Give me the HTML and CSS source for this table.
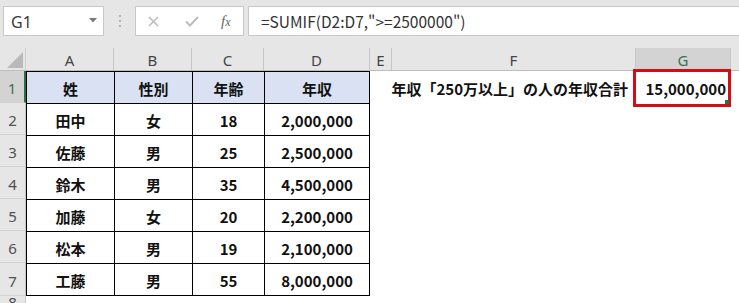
FILE: index.html
```html
<!DOCTYPE html>
<html lang="ja">
<head>
<meta charset="utf-8">
<link rel="stylesheet" href="styles.css">
</head>
<body>
<div class="app">
  <div class="toolbar">
    <div class="namebox">
      <span class="nb-text">G1</span>
      <svg class="caret" width="8" height="5" viewBox="0 0 8 5"><path d="M0 0H8L4 4.5Z" fill="#7a7a7a"/></svg>
    </div>
    <div class="dots">
      <svg width="4" height="14" viewBox="0 0 4 14"><circle cx="2" cy="2" r="1.1" fill="#a8a8a8"/><circle cx="2" cy="7" r="1.1" fill="#a8a8a8"/><circle cx="2" cy="12" r="1.1" fill="#a8a8a8"/></svg>
    </div>
    <div class="fxbox">
      <svg class="ic-x" width="11" height="11" viewBox="0 0 11 11"><path d="M1 1L10 10M10 1L1 10" stroke="#bdbdbd" stroke-width="1.6" fill="none"/></svg>
      <svg class="ic-check" width="14" height="11" viewBox="0 0 14 11"><path d="M1 5.5L5 9.5L13 1" stroke="#bdbdbd" stroke-width="2" fill="none"/></svg>
      <span class="fx">f<span class="fx-x">x</span></span>
    </div>
    <div class="formula">=SUMIF(D2:D7,"&gt;=2500000")</div>
  </div>

  <div class="sheet">
    <div class="corner"><svg width="26" height="23" viewBox="0 0 26 23"><path d="M23 4V20H7Z" fill="#b9b9b9"/></svg></div>
    <div class="colhead">A</div>
    <div class="colhead">B</div>
    <div class="colhead">C</div>
    <div class="colhead">D</div>
    <div class="colhead">E</div>
    <div class="colhead">F</div>
    <div class="colhead sel">G</div>
    <div class="colhead last"></div>

    <div class="rowheads">
      <div class="rowhead sel">1</div>
      <div class="rowhead">2</div>
      <div class="rowhead">3</div>
      <div class="rowhead">4</div>
      <div class="rowhead">5</div>
      <div class="rowhead">6</div>
      <div class="rowhead tall">7</div>
      <div class="rowhead partial">8</div>
    </div>

    <div class="table">
      <div class="cell hdr">姓</div>
      <div class="cell hdr">性別</div>
      <div class="cell hdr">年齢</div>
      <div class="cell hdr">年収</div>

      <div class="cell">田中</div><div class="cell">女</div><div class="cell">18</div><div class="cell">2,000,000</div>
      <div class="cell">佐藤</div><div class="cell">男</div><div class="cell">25</div><div class="cell">2,500,000</div>
      <div class="cell">鈴木</div><div class="cell">男</div><div class="cell">35</div><div class="cell">4,500,000</div>
      <div class="cell">加藤</div><div class="cell">女</div><div class="cell">20</div><div class="cell">2,200,000</div>
      <div class="cell">松本</div><div class="cell">男</div><div class="cell">19</div><div class="cell">2,100,000</div>
      <div class="cell">工藤</div><div class="cell">男</div><div class="cell">55</div><div class="cell">8,000,000</div>
    </div>

    <div class="label-f1">年収「250万以上」の人の年収合計</div>
    <div class="value-g1">
      <span>15,000,000</span>
      <div class="redbox"></div>
      <div class="handle"></div>
    </div>
  </div>
</div>
</body>
</html>
```

FILE: styles.css
```css
html, body {
  margin: 0;
  padding: 0;
  background: #e6e6e6;
}
body {
  width: 739px;
  height: 303px;
  overflow: hidden;
  font-family: "Noto Sans CJK JP", "Noto Sans", sans-serif;
}
.app {
  display: flex;
  flex-direction: column;
  height: 303px;
}

/* ---------- toolbar ---------- */
.toolbar {
  height: 48px;
  box-sizing: border-box;
  padding: 6px 0 0 3px;
  display: flex;
  align-items: flex-start;
  flex: none;
}
.namebox {
  width: 101px;
  height: 30px;
  box-sizing: border-box;
  background: #fff;
  border: 1px solid #c9c9c9;
  display: flex;
  align-items: center;
  padding: 0 6px 0 7px;
}
.nb-text {
  flex: 1;
  font-family: "Noto Sans", sans-serif;
  font-size: 16px;
  color: #3a3a3a;
  line-height: 1;
  padding-top: 2px;
}
.caret { margin-top: -1px; }
.dots {
  width: 31px;
  height: 30px;
  display: flex;
  align-items: center;
  justify-content: center;
}
.fxbox {
  width: 109px;
  height: 30px;
  box-sizing: border-box;
  background: #fff;
  border: 1px solid #c9c9c9;
  display: flex;
  align-items: center;
  padding-left: 12px;
}
.ic-x { margin-right: 26px; }
.ic-check { margin-right: 22px; }
.fx {
  font-family: "Liberation Serif", serif;
  font-style: italic;
  font-size: 15px;
  color: #666;
  line-height: 1;
}
.fx-x { font-size: 12px; }
.formula {
  flex: 1;
  height: 30px;
  margin-left: 4px;
  box-sizing: border-box;
  background: #fff;
  border: 1px solid #c9c9c9;
  border-right: none;
  padding-left: 12px;
  display: flex;
  align-items: center;
  font-size: 15.5px;
  color: #333;
  white-space: pre;
}

/* ---------- sheet ---------- */
.sheet {
  flex: 1;
  display: grid;
  grid-template-columns: 26px 88px 78px 72px 106px 22px 244px 95px 1fr;
  grid-template-rows: 23px repeat(6, 32px) 33px 1fr;
  background: #fff;
}
.corner {
  background: #e6e6e6;
  border-bottom: 1px solid #bdbdbd;
  box-sizing: border-box;
  border-right: 1px solid #cfcfcf;
}
.corner svg { display: block; }
.colhead {
  background: #e6e6e6;
  box-sizing: border-box;
  border-right: 1px solid #c6c6c6;
  border-bottom: 1px solid #bdbdbd;
  display: flex;
  align-items: center;
  justify-content: center;
  font-family: "Noto Sans", sans-serif;
  font-size: 15px;
  color: #444;
  padding-top: 1px;
}
.colhead.sel {
  background: #d3d3d3;
  color: #3f6f55;
}
.colhead.last { border-right: none; }

.rowheads {
  grid-column: 1;
  grid-row: 2 / -1;
  display: flex;
  flex-direction: column;
  background: #e6e6e6;
  border-right: 1px solid #c6c6c6;
}
.rowhead {
  height: 32px;
  flex: none;
  box-sizing: border-box;
  border-bottom: 1px solid #d2d2d2;
  display: flex;
  align-items: center;
  justify-content: center;
  font-family: "Noto Sans", sans-serif;
  font-size: 15px;
  color: #505050;
  padding-top: 3px;
}
.rowhead.tall { height: 33px; }
.rowhead.sel {
  background: #d3d3d3;
  color: #3f6f55;
  border-right: 2px solid #217346;
  margin-right: -1px;
}
.rowhead.partial {
  flex: 1;
  border-bottom: none;
  align-items: flex-start;
  padding-top: 0;
  line-height: 1;
  margin-top: -1px;
}

.table {
  grid-column: 2 / 6;
  grid-row: 2 / 9;
  display: grid;
  grid-template-columns: 87px 77px 71px 104px;
  grid-template-rows: repeat(7, 31px);
  gap: 1px;
  padding: 1px;
  background: #000;
}
.cell {
  background: #fff;
  display: flex;
  align-items: center;
  justify-content: center;
  font-size: 15px;
  font-weight: 700;
  color: #111;
  padding-top: 2px;
  box-sizing: border-box;
}
.cell.hdr { background: #d9e1f2; }

.label-f1 {
  grid-column: 7;
  grid-row: 2;
  display: flex;
  align-items: center;
  justify-content: flex-end;
  padding-right: 8px;
  padding-top: 2px;
  font-size: 15px;
  font-weight: 700;
  color: #111;
  white-space: nowrap;
}
.value-g1 {
  grid-column: 8;
  grid-row: 2;
  position: relative;
  display: flex;
  align-items: center;
  justify-content: flex-end;
  padding-right: 5px;
  padding-top: 2px;
  font-size: 15px;
  font-weight: 700;
  color: #111;
}
.redbox {
  position: absolute;
  left: -3px;
  top: -2px;
  width: 98px;
  height: 38px;
  box-sizing: border-box;
  border: 3px solid #d50d12;
}
.handle {
  position: absolute;
  right: 2px;
  bottom: -1px;
  width: 4px;
  height: 4px;
  background: #217346;
}
```
